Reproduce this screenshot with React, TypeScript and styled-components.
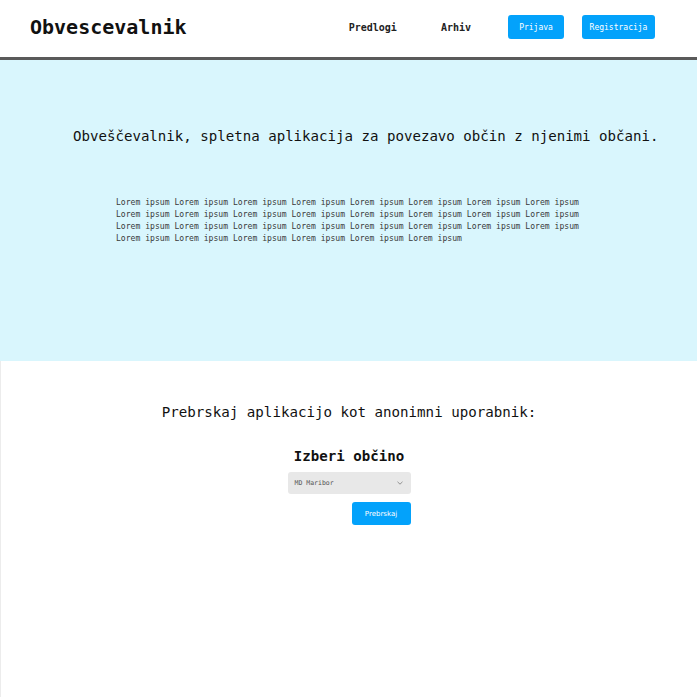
import React from "react";
import styled, { createGlobalStyle } from "styled-components";

const Global = createGlobalStyle`
  html, body { margin: 0; padding: 0; background: #fff; }
  body { font-family: "DejaVu Sans Mono", "Liberation Mono", monospace; color: #111; }
  * { box-sizing: border-box; }
`;

const Header = styled.header`
  height: 60px;
  display: flex;
  align-items: center;
  padding: 0 42px 3px 30px;
  border-bottom: 3px solid #5a5a5a;
  background: #fff;
`;

const Logo = styled.h1`
  margin: 0;
  font-size: 20px;
  font-weight: bold;
  color: #111;
  flex: 1;
`;

const Nav = styled.nav`
  display: flex;
  align-items: center;
`;

const NavLink = styled.a<{ $gap: number }>`
  font-size: 10px;
  font-weight: bold;
  color: #222;
  text-decoration: none;
  margin-right: ${(p) => p.$gap}px;
`;

const NavButton = styled.button<{ $w: number; $gap?: number }>`
  width: ${(p) => p.$w}px;
  height: 24px;
  margin-right: ${(p) => p.$gap ?? 0}px;
  border: none;
  border-radius: 3px;
  background: #03a2fb;
  color: #fff;
  font-family: "DejaVu Sans Mono", monospace;
  font-size: 8px;
  padding: 0;
`;

const Hero = styled.section`
  height: 301px;
  background: #d9f6fd;
  padding: 68px 0 0 0;
`;

const HeroTitle = styled.h2`
  margin: 0 0 0 73px;
  font-size: 14.1px;
  line-height: 17px;
  font-weight: normal;
  color: #111;
`;

const Lorem = styled.p`
  margin: 51px 0 0 116px;
  width: 475px;
  font-size: 8.1px;
  line-height: 12px;
  color: #3a3a3a;
`;

const Browse = styled.section`
  height: 336px;
  border-left: 1px solid #ececec;
  display: flex;
  flex-direction: column;
  align-items: center;
  padding-top: 43px;
`;

const BrowseTitle = styled.p`
  margin: 0;
  font-size: 14.15px;
  line-height: 17px;
  color: #111;
`;

const Form = styled.div`
  margin-top: 27px;
  display: flex;
  flex-direction: column;
  align-items: center;
`;

const FormTitle = styled.h3`
  margin: 0 0 7px 0;
  font-size: 14.1px;
  line-height: 17px;
  font-weight: bold;
  color: #111;
`;

const Controls = styled.div`
  width: 123px;
  display: flex;
  flex-direction: column;
  align-items: flex-end;
  gap: 8px;
`;

const Select = styled.div`
  width: 123px;
  height: 22px;
  background: #e8e8e8;
  border-radius: 3px;
  display: flex;
  align-items: center;
  justify-content: space-between;
  padding: 0 8px 0 7px;
  font-size: 6.5px;
  color: #555;
`;

const SubmitButton = styled.button`
  width: 59px;
  height: 23px;
  border: none;
  border-radius: 3px;
  background: #03a2fb;
  color: #fff;
  font-family: "DejaVu Sans", "Liberation Sans", sans-serif;
  font-size: 7px;
  padding: 0;
`;

export default function App() {
  return (
    <>
      <Global />
      <Header>
        <Logo>Obvescevalnik</Logo>
        <Nav>
          <NavLink $gap={44}>Predlogi</NavLink>
          <NavLink $gap={37}>Arhiv</NavLink>
          <NavButton $w={56} $gap={18}>Prijava</NavButton>
          <NavButton $w={73}>Registracija</NavButton>
        </Nav>
      </Header>
      <Hero>
        <HeroTitle>Obveščevalnik, spletna aplikacija za povezavo občin z njenimi občani.</HeroTitle>
        <Lorem>{Array(30).fill("Lorem ipsum").join(" ")}</Lorem>
      </Hero>
      <Browse>
        <BrowseTitle>Prebrskaj aplikacijo kot anonimni uporabnik:</BrowseTitle>
        <Form>
          <FormTitle>Izberi občino</FormTitle>
          <Controls>
            <Select>
              <span>MD Maribor</span>
              <svg width="6" height="4" viewBox="0 0 6 4">
                <path d="M0.5 0.8 L3 3.2 L5.5 0.8" fill="none" stroke="#888" strokeWidth="0.9" />
              </svg>
            </Select>
            <SubmitButton>Prebrskaj</SubmitButton>
          </Controls>
        </Form>
      </Browse>
    </>
  );
}
